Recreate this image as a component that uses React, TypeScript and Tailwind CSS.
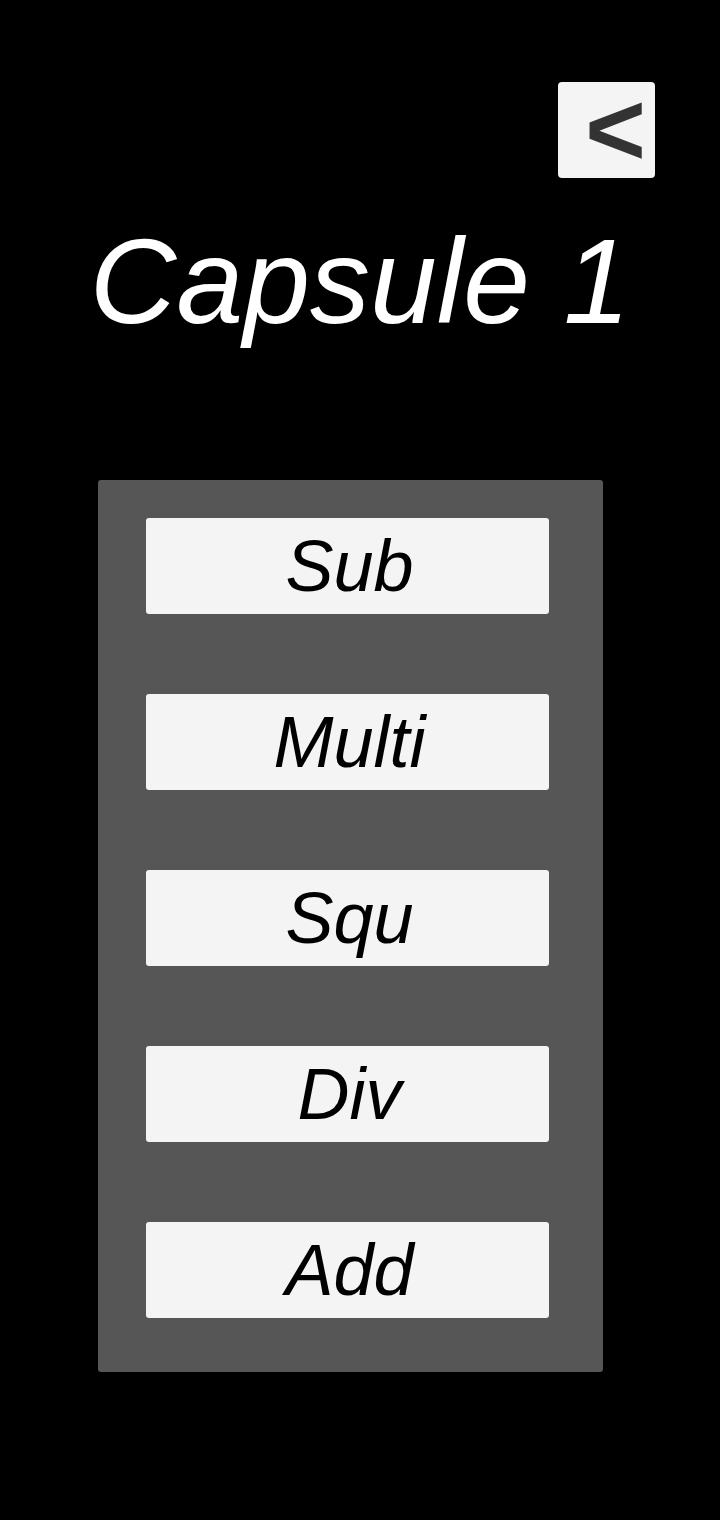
export default function App() {
  const items = ['Sub', 'Multi', 'Squ', 'Div', 'Add'];

  return (
    <div className="w-[720px] h-[1520px] bg-black flex flex-col" style={{ fontFamily: '"Liberation Sans", Arial, sans-serif' }}>
      {/* back button */}
      <div className="flex justify-end pt-[82px] pr-[65px]">
        <button className="w-[97px] h-[96px] bg-[#f4f4f4] rounded-[4px] flex items-center justify-center text-[#333333] italic font-bold text-[104px] leading-none pb-[2px] pl-[14px]">
          &lt;
        </button>
      </div>

      {/* title */}
      <h1 className="mt-[43px] text-center text-white italic text-[120px] leading-none">Capsule 1</h1>

      {/* panel */}
      <div className="ml-[98px] mt-[139px] w-[505px] h-[892px] bg-[#565656] rounded-[3px] pt-[38px] pl-[48px] flex flex-col gap-[80px]">
        {items.map((label) => (
          <button
            key={label}
            className="w-[403px] h-[96px] bg-[#f4f4f4] rounded-[3px] flex items-center justify-center text-black italic text-[72px] leading-none pl-[4px]"
          >
            {label}
          </button>
        ))}
      </div>
    </div>
  );
}
